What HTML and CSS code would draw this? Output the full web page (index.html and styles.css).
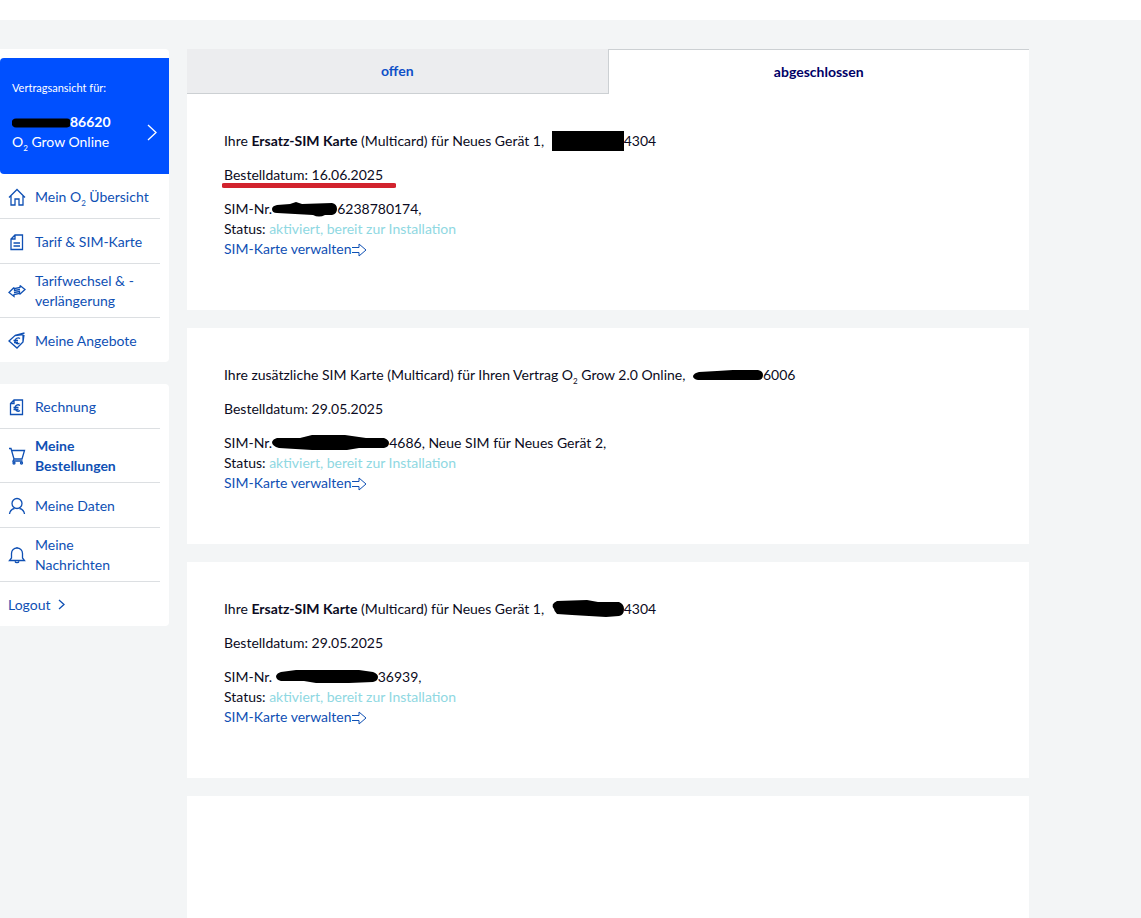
FILE: index.html
```
<!DOCTYPE html>
<html lang="de">
<head>
    <meta charset="UTF-8">
    <meta name="viewport" content="width=device-width, initial-scale=1.0">
    <title>Meine Bestellungen</title>
    <link rel="stylesheet" href="styles.css">
</head>

<body>
    <div class="page">
        <aside class="sidebar">
            <nav class="menu menu-contract">
                <a class="contract" href="#">
                    <span class="contract-label">Vertragsansicht für:</span>
                    <span class="contract-row">
                        <span class="contract-info">
                            <b><svg class="mark" width="58" height="12" viewBox="0 0 58 12"><path d="M4 7H55" stroke="#000" stroke-width="9" stroke-linecap="round"/></svg>86620</b>
                            <span>O<sub>2</sub> Grow Online</span>
                        </span>
                        <svg class="chevron" width="10" height="17" viewBox="0 0 10 17"><path d="M1 1L9 8.500L1 16"/></svg>
                    </span>
                </a>
                <ul>
                    <li><a href="#">
                        <svg class="icon" viewBox="0 0 18 18"><path d="M1 9.500L9 1.500L17 9.500M3 8V17H7V11H11V17H15V8"/></svg>
                        <span>Mein O<sub>2</sub> Übersicht</span>
                    </a></li>
                    <li><a href="#">
                        <svg class="icon" viewBox="0 0 18 18"><path d="M7 2H14.500V16.500H3V6ZM7 2V6H3M5.500 10H12M5.500 13H12"/></svg>
                        <span>Tarif &amp; SIM-Karte</span>
                    </a></li>
                    <li><a href="#">
                        <svg class="icon" viewBox="0 0 18 18"><path d="M6 5.500L1 10.500L6 14.500V12.500L11.500 11.500V9.500L6 10.500M12 3.500L17 7.500L11.500 12.500M12 3.500V5.500L6.500 6.500V8.500L12 7.500M6 5.500V7"/></svg>
                        <span>Tarifwechsel &amp; -verlängerung</span>
                    </a></li>
                    <li><a href="#">
                        <svg class="icon" viewBox="0 0 18 18"><path d="M1 9L7 3.500L15 2.500V10L9 16ZM7 3.500L16.500 1M15 10L16 3M12 6.500C10 5 7 6.500 7 9C7 11.500 9.500 12.500 11.500 11M5.500 8.500H10M6 10.500H10"/></svg>
                        <span>Meine Angebote</span>
                    </a></li>
                </ul>
            </nav>

            <nav class="menu">
                <ul>
                    <li><a href="#">
                        <svg class="icon" viewBox="0 0 18 18"><path d="M6 2H14.500V16.500H2.500V5.500ZM6 2V5.500H2.500M12 7.500C10 6 7 7 7 10C7 13 10 14 12 12.500M5.500 9.500H10.500M5.500 11.500H10.500"/></svg>
                        <span>Rechnung</span>
                    </a></li>
                    <li><a class="active" href="#">
                        <svg class="icon" viewBox="0 0 18 18"><path d="M1 1.500H3L6 12H14L16.500 3.500H3.500M6 12L5 14H14.500"/><circle cx="6" cy="16" r="1"/><circle cx="13.500" cy="16" r="1"/></svg>
                        <span>Meine Bestellungen</span>
                    </a></li>
                    <li><a href="#">
                        <svg class="icon" viewBox="0 0 18 18"><circle cx="9" cy="6.500" r="5"/><path d="M1.500 17C2 13.500 4 12 6.500 11.500M16.500 17C16 13.500 14 12 11.500 11.500"/></svg>
                        <span>Meine Daten</span>
                    </a></li>
                    <li><a href="#">
                        <svg class="icon" viewBox="0 0 18 18"><path d="M1.500 14.500H16.500L14.500 12V7.500C14.500 4 12 2 9 2C6 2 3.500 4 3.500 7.500V12ZM7 15.500C7.500 17 10.500 17 11 15.500M9 2V1"/></svg>
                        <span>Meine Nachrichten</span>
                    </a></li>
                    <li><a class="logout" href="#">
                        <span>Logout</span>
                        <svg class="chevron" width="7" height="11" viewBox="0 0 7 11"><path d="M1 1L6 5.500L1 10"/></svg>
                    </a></li>
                </ul>
            </nav>
        </aside>

        <main class="orders">
            <div class="order-group">
                <div class="tabs" role="tablist">
                    <button class="tab" type="button" role="tab">offen</button>
                    <button class="tab tab-active" type="button" role="tab" aria-selected="true">abgeschlossen</button>
                </div>
                <section class="order">
                    <p>Ihre <b>Ersatz-SIM Karte</b> (Multicard) für Neues Gerät 1, <svg class="mark" width="76" height="20" viewBox="0 0 76 20"><path d="M4 0H76V20H4Z"/></svg>4304</p>
                    <p><span class="underlined">Bestelldatum: 16.06.2025<svg class="red-line" viewBox="0 0 174 5"><path d="M2 2.500H172"/></svg></span></p>
                    <p>SIM-Nr.<svg class="mark" width="65" height="16" viewBox="0 0 65 16"><path d="M5 4L18 3L24 1L30 3L60 2Q65 3 65 8Q65 13 60 14L53 14Q47 17 41 14L5 12Q0 12 0 8Q0 5 5 4Z"/></svg>6238780174,<br>
                    Status: <span class="status">aktiviert, bereit zur Installation</span><br>
                    <a href="#">SIM-Karte verwalten<svg class="arrow" viewBox="0 0 15 14"><path d="M0 4.500H7V1L14 7L7 13V9.500H0"/></svg></a></p>
                </section>
            </div>

            <section class="order">
                <p>Ihre zusätzliche SIM Karte (Multicard) für Ihren Vertrag O<sub>2</sub> Grow 2.0 Online, <svg class="mark" width="74" height="12" viewBox="0 0 74 12"><path d="M10 3L28 2L44 1H69Q74 2 74 6Q74 11 69 11L46 11L9 11Q4 10 4 7Q5 4 10 3Z"/></svg>6006</p>
                <p>Bestelldatum: 29.05.2025</p>
                <p>SIM-Nr.<svg class="mark" width="117" height="16" viewBox="0 0 117 16"><path d="M5 3L28 3L40 0H73L94 3H112Q117 5 117 8Q117 12 112 13H87L75 15H40L7 13Q0 11 0 7Q1 4 5 3Z"/></svg>4686, Neue SIM für Neues Gerät 2,<br>
                Status: <span class="status">aktiviert, bereit zur Installation</span><br>
                <a href="#">SIM-Karte verwalten<svg class="arrow" viewBox="0 0 15 14"><path d="M0 4.500H7V1L14 7L7 13V9.500H0"/></svg></a></p>
            </section>

            <section class="order">
                <p>Ihre <b>Ersatz-SIM Karte</b> (Multicard) für Neues Gerät 1, <svg class="mark" width="76" height="17" viewBox="0 0 76 17"><path d="M9 1L39 0L50 2L71 2Q76 4 76 9Q76 15 71 16L58 17L24 15L9 14Q6 11 6 9Q2 4 9 1Z"/></svg>4304</p>
                <p>Bestelldatum: 29.05.2025</p>
                <p>SIM-Nr. <svg class="mark" width="102" height="14" viewBox="0 0 102 14"><path d="M5 2L20 0H83L97 2Q102 4 102 7Q102 11 97 12L73 13H40L28 11H5Q0 10 0 6Q1 3 5 2Z"/></svg>36939,<br>
                Status: <span class="status">aktiviert, bereit zur Installation</span><br>
                <a href="#">SIM-Karte verwalten<svg class="arrow" viewBox="0 0 15 14"><path d="M0 4.500H7V1L14 7L7 13V9.500H0"/></svg></a></p>
            </section>

            <section class="order"></section>
        </main>
    </div>
</body>
</html>
```
FILE: styles.css
```
* {
    box-sizing: border-box;
}

body {
    margin: 0;
    background-color: #f3f5f6;
    border-top: 20px solid #fff;
    font-family: Lato, sans-serif;
    font-size: 14px;
    line-height: 20px;
    color: #0b0b22;
}

a {
    color: #0f50b4;
    text-decoration: none;
}

sub {
    font-size: 8px;
    line-height: 1;
}

svg {
    fill: none;
    stroke: currentColor;
}

.page {
    display: flex;
    gap: 18px;
    padding: 29px 112px 0 0;
}

.sidebar {
    flex: 0 0 169px;
}

.menu {
    margin-bottom: 22px;
    background-color: #fff;
    border-radius: 0 4px 4px 0;
}

.menu-contract {
    padding-top: 9px;
}

.contract {
    display: block;
    height: 116px;
    padding: 20px 12px;
    background-color: #0050ff;
    border-radius: 4px 0 0 4px;
    color: #fff;
}

.contract-label {
    display: block;
    margin-bottom: 14px;
    font-size: 11px;
}

.contract-row {
    display: flex;
    align-items: center;
    justify-content: space-between;
}

.contract-info b,
.contract-info span {
    display: block;
}

.chevron {
    stroke-width: 1.3;
}

.menu ul {
    margin: 0;
    padding: 0;
    list-style: none;
}

.menu li {
    margin-right: 9px;
    border-bottom: 1px solid #dcdfe2;
}

.menu li:last-child {
    border-bottom: none;
}

.menu li a {
    display: flex;
    align-items: center;
    gap: 9px;
    min-height: 44px;
    padding: 7px 10px 6px 8px;
}

.menu li a.active {
    font-weight: bold;
}

.menu li a.logout {
    gap: 7px;
}

.icon {
    flex: none;
    width: 18px;
    height: 18px;
    stroke-width: 1.3;
}

.orders {
    flex: 1;
    min-width: 0;
}

.tabs {
    display: flex;
}

.tab {
    flex: 1;
    height: 45px;
    padding-bottom: 2px;
    border: 0 solid #ccd0d3;
    border-bottom-width: 1px;
    background-color: #ecedef;
    color: #0f50c8;
    font: bold 14px Lato, sans-serif;
    cursor: pointer;
}

.tab-active {
    border-width: 1px 0 0 1px;
    background-color: #fff;
    color: #000066;
}

.order {
    min-height: 216px;
    margin-bottom: 18px;
    padding: 37px;
    background-color: #fff;
}

.order p {
    margin: 0 0 14px;
}

.status {
    color: #8fd8e2;
}

.mark {
    margin-top: -3px;
    vertical-align: middle;
}

.order .mark {
    fill: #000;
    stroke: none;
}

.arrow {
    width: 15px;
    height: 14px;
    vertical-align: -3px;
}

.underlined {
    position: relative;
}

.red-line {
    position: absolute;
    left: -2px;
    top: 17px;
    width: 174px;
    height: 5px;
    stroke: #d2232e;
    stroke-width: 5;
    stroke-linecap: round;
}
```
